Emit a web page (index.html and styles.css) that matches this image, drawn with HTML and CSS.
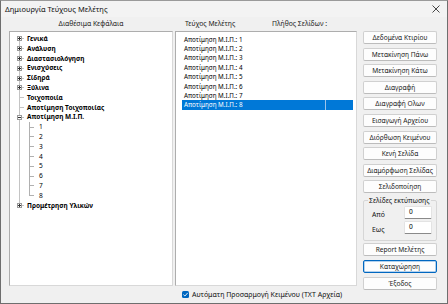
FILE: index.html
```html
<!DOCTYPE html>
<html lang="el">
<head>
<meta charset="utf-8">
<title>Δημιουργία Τεύχους Μελέτης</title>
<link rel="stylesheet" href="styles.css">
</head>
<body>
<div class="window">
  <div class="titlebar">
    <span class="title">Δημιουργία Τεύχους Μελέτης</span>
    <svg class="close" width="8" height="8" viewBox="0 0 8 8"><path d="M0.5 0.5 L7.5 7.5 M7.5 0.5 L0.5 7.5" stroke="#333" stroke-width="0.9" fill="none"/></svg>
  </div>
  <div class="main">
    <div class="col-tree">
      <div class="hdr hdr-center">Διαθέσιμα Κεφάλαια</div>
      <div class="box tree">
        <div class="row root"><span class="conn first"><span class="exp plus"></span></span><span class="lbl">Γενικά</span></div>
        <div class="row root"><span class="conn"><span class="exp plus"></span></span><span class="lbl">Ανάλυση</span></div>
        <div class="row root"><span class="conn"><span class="exp plus"></span></span><span class="lbl">Διαστασιολόγηση</span></div>
        <div class="row root"><span class="conn"><span class="exp plus"></span></span><span class="lbl">Ενισχύσεις</span></div>
        <div class="row root"><span class="conn"><span class="exp plus"></span></span><span class="lbl">Σίδηρά</span></div>
        <div class="row root"><span class="conn"><span class="exp plus"></span></span><span class="lbl">Ξύλινα</span></div>
        <div class="row root"><span class="conn leaf"></span><span class="lbl">Τοιχοποιία</span></div>
        <div class="row root"><span class="conn leaf"></span><span class="lbl">Αποτίμηση Τοιχοποιίας</span></div>
        <div class="row root"><span class="conn"><span class="exp minus"></span></span><span class="lbl">Αποτίμηση Μ.Ι.Π.</span></div>
        <div class="row child"><span class="conn pass"></span><span class="conn2"></span><span class="lbl">1</span></div>
        <div class="row child"><span class="conn pass"></span><span class="conn2"></span><span class="lbl">2</span></div>
        <div class="row child"><span class="conn pass"></span><span class="conn2"></span><span class="lbl">3</span></div>
        <div class="row child"><span class="conn pass"></span><span class="conn2"></span><span class="lbl">4</span></div>
        <div class="row child"><span class="conn pass"></span><span class="conn2"></span><span class="lbl">5</span></div>
        <div class="row child"><span class="conn pass"></span><span class="conn2"></span><span class="lbl">6</span></div>
        <div class="row child"><span class="conn pass"></span><span class="conn2"></span><span class="lbl">7</span></div>
        <div class="row child"><span class="conn pass"></span><span class="conn2 last"></span><span class="lbl">8</span></div>
        <div class="row root"><span class="conn last"><span class="exp plus"></span></span><span class="lbl">Προμέτρηση Υλικών</span></div>
      </div>
    </div>
    <div class="col-list">
      <div class="hdr hdr-list"><span class="h1">Τεύχος Μελέτης</span><span class="h2">Πλήθος Σελίδων :</span></div>
      <div class="box list">
        <div class="item"><span class="c1">Αποτίμηση Μ.Ι.Π.: 1</span><span class="c2"></span></div>
        <div class="item"><span class="c1">Αποτίμηση Μ.Ι.Π.: 2</span><span class="c2"></span></div>
        <div class="item"><span class="c1">Αποτίμηση Μ.Ι.Π.: 3</span><span class="c2"></span></div>
        <div class="item"><span class="c1">Αποτίμηση Μ.Ι.Π.: 4</span><span class="c2"></span></div>
        <div class="item"><span class="c1">Αποτίμηση Μ.Ι.Π.: 5</span><span class="c2"></span></div>
        <div class="item"><span class="c1">Αποτίμηση Μ.Ι.Π.: 6</span><span class="c2"></span></div>
        <div class="item"><span class="c1">Αποτίμηση Μ.Ι.Π.: 7</span><span class="c2"></span></div>
        <div class="item selected"><span class="c1">Αποτίμηση Μ.Ι.Π.: 8</span><span class="c2"></span></div>
      </div>
      <label class="check"><span class="cb"><svg width="7" height="7" viewBox="0 0 7 7"><path d="M1.4 3.6 L2.9 5 L5.7 1.9" stroke="#fff" stroke-width="0.9" fill="none"/></svg></span>Αυτόματη Προσαρμογή Κειμένου (TXT Αρχεία)</label>
    </div>
    <div class="col-btns">
      <div class="btns">
        <button class="btn">Δεδομένα Κτιρίου</button>
        <button class="btn">Μετακίνηση Πάνω</button>
        <button class="btn">Μετακίνηση Κάτω</button>
        <button class="btn">Διαγραφή</button>
        <button class="btn">Διαγραφή Ολων</button>
        <button class="btn">Εισαγωγή Αρχείου</button>
        <button class="btn">Διόρθωση Κειμένου</button>
        <button class="btn">Κενή Σελίδα</button>
        <button class="btn">Διαμόρφωση Σελίδας</button>
        <button class="btn">Σελιδοποίηση</button>
      </div>
      <fieldset class="group">
        <legend>Σελίδες εκτύπωσης</legend>
        <div class="field"><span class="flbl">Από</span><span class="input">0</span></div>
        <div class="field"><span class="flbl">Εως</span><span class="input">0</span></div>
      </fieldset>
      <div class="btns">
        <button class="btn">Report Μελέτης</button>
        <button class="btn default">Καταχώρηση</button>
        <button class="btn">Έξοδος</button>
      </div>
    </div>
  </div>
</div>
</body>
</html>
```
FILE: styles.css
```css
* { box-sizing: border-box; }
html, body { margin: 0; padding: 0; }
body {
  width: 448px;
  height: 304px;
  overflow: hidden;
  font-family: "Noto Sans", "Open Sans", sans-serif;
  font-size: 7px;
  color: #000;
  background: #f0f0f0;
}
.window {
  width: 448px;
  height: 304px;
  border: 1px solid #6e6e6e;
  border-top-color: #9a9a9a;
  background: #f0f0f0;
  display: flex;
  flex-direction: column;
}
.titlebar {
  height: 16px;
  flex: none;
  display: flex;
  align-items: center;
  justify-content: space-between;
  padding: 0 7px 0 4px;
  background: #f3f3f3;
}
.title { font-size: 7.5px; color: #111; }
.close { display: block; }
.main {
  flex: 1;
  display: flex;
  padding-left: 8px;
}
.col-tree { width: 164px; display: flex; flex-direction: column; }
.col-list { width: 182px; margin-left: 2px; display: flex; flex-direction: column; }
.col-btns { width: 74px; margin-left: 6px; padding-top: 14px; display: flex; flex-direction: column; }
.hdr { height: 14px; line-height: 14px; font-size: 6.8px; color: #222; }
.hdr-center { text-align: center; }
.hdr-list { display: flex; padding-left: 10px; }
.hdr-list .h1 { width: 87px; }
.box {
  background: #fff;
  border: 1px solid #adadad;
  border-right-color: #d8d8d8;
  border-bottom-color: #d8d8d8;
  height: 255px;
}
.tree { padding-top: 2px; padding-left: 4px; }
.row { height: 9.8px; display: flex; align-items: stretch; line-height: 9.8px; }
.row.root .lbl { font-weight: 700; font-size: 6.5px; }
.row.child .lbl { font-size: 6.6px; }
.row .lbl { padding-left: 3px; white-space: nowrap; }
.conn {
  width: 10px;
  flex: none;
  display: flex;
  align-items: center;
  justify-content: flex-start;
  padding-left: 3px;
  background:
    linear-gradient(#c4c4c4, #c4c4c4) no-repeat 5px 0 / 1px 100%,
    linear-gradient(#c4c4c4, #c4c4c4) no-repeat 5px 50% / 5px 1px;
}
.conn.first {
  background:
    linear-gradient(#c4c4c4, #c4c4c4) no-repeat 5px 100% / 1px 50%,
    linear-gradient(#c4c4c4, #c4c4c4) no-repeat 5px 50% / 5px 1px;
}
.conn.last {
  background:
    linear-gradient(#c4c4c4, #c4c4c4) no-repeat 5px 0 / 1px 50%,
    linear-gradient(#c4c4c4, #c4c4c4) no-repeat 5px 50% / 5px 1px;
}
.conn.pass {
  background: linear-gradient(#c4c4c4, #c4c4c4) no-repeat 5px 0 / 1px 100%;
}
.conn2 {
  width: 12px;
  flex: none;
  background:
    linear-gradient(#b0b0b0, #b0b0b0) no-repeat 5px 0 / 1px 100%,
    linear-gradient(#b0b0b0, #b0b0b0) no-repeat 5px 50% / 5px 1px;
}
.conn2.last {
  background:
    linear-gradient(#b0b0b0, #b0b0b0) no-repeat 5px 0 / 1px 50%,
    linear-gradient(#b0b0b0, #b0b0b0) no-repeat 5px 50% / 5px 1px;
}
.exp {
  width: 5px;
  height: 5px;
  border: 1px solid #9a9a9a;
  background: #fff;
  display: block;
  flex: none;
}
.exp.plus {
  background:
    linear-gradient(#333, #333) no-repeat center / 3px 1px,
    linear-gradient(#333, #333) no-repeat center / 1px 3px,
    #fff;
}
.exp.minus {
  background: linear-gradient(#333, #333) no-repeat center / 3px 1px, #fff;
}
.list { padding-top: 2.6px; }
.item {
  height: 9.4px;
  line-height: 9.4px;
  display: flex;
  margin: 0 3px 0 6px;
  font-size: 6.3px;
}
.item .c1 { width: 143px; padding-left: 2px; white-space: nowrap; }
.item .c2 { flex: 1; }
.item.selected { background: #0078d7; color: #fff; }
.item.selected .c2 { border-left: 1px solid #9cc3ea; }
.check {
  display: flex;
  align-items: center;
  height: 17px;
  padding-left: 7px;
  font-size: 7px;
  color: #111;
}
.cb {
  width: 7px;
  height: 7px;
  border-radius: 1.5px;
  background: #0067c0;
  margin-right: 3px;
  display: flex;
}
.cb svg { display: block; }
.btns { display: flex; flex-direction: column; gap: 3.6px; }
.btn {
  height: 13px;
  padding: 0;
  margin: 0;
  font-family: inherit;
  font-size: 6.6px;
  color: #1a1a1a;
  background: #fdfdfd;
  border: 1px solid #d0d0d0;
  border-bottom-color: #bcbcbc;
  border-radius: 2px;
  line-height: 11px;
  text-align: center;
  white-space: nowrap;
}
.btn.default { border: 1px solid #0067c0; box-shadow: inset 0 0 0 0.5px #6aa6dd; }
.group {
  margin: 3px 0 2px 0;
  padding: 0 4px 2px 8px;
  border: 1px solid #d6d6d6;
  border-radius: 2px;
  height: 45px;
}
.group legend {
  padding: 0 1px;
  margin-left: -4px;
  font-size: 6.8px;
  color: #111;
}
.field {
  display: flex;
  align-items: center;
  justify-content: space-between;
  height: 15px;
}
.flbl { font-size: 6.8px; color: #111; padding-top: 3px; }
.input {
  width: 28px;
  height: 13px;
  background: #fff;
  border: 1px solid #e3e3e3;
  border-bottom-color: #8a8a8a;
  border-radius: 1.5px;
  padding-left: 4px;
  line-height: 9px;
  font-size: 6.6px;
}
```
